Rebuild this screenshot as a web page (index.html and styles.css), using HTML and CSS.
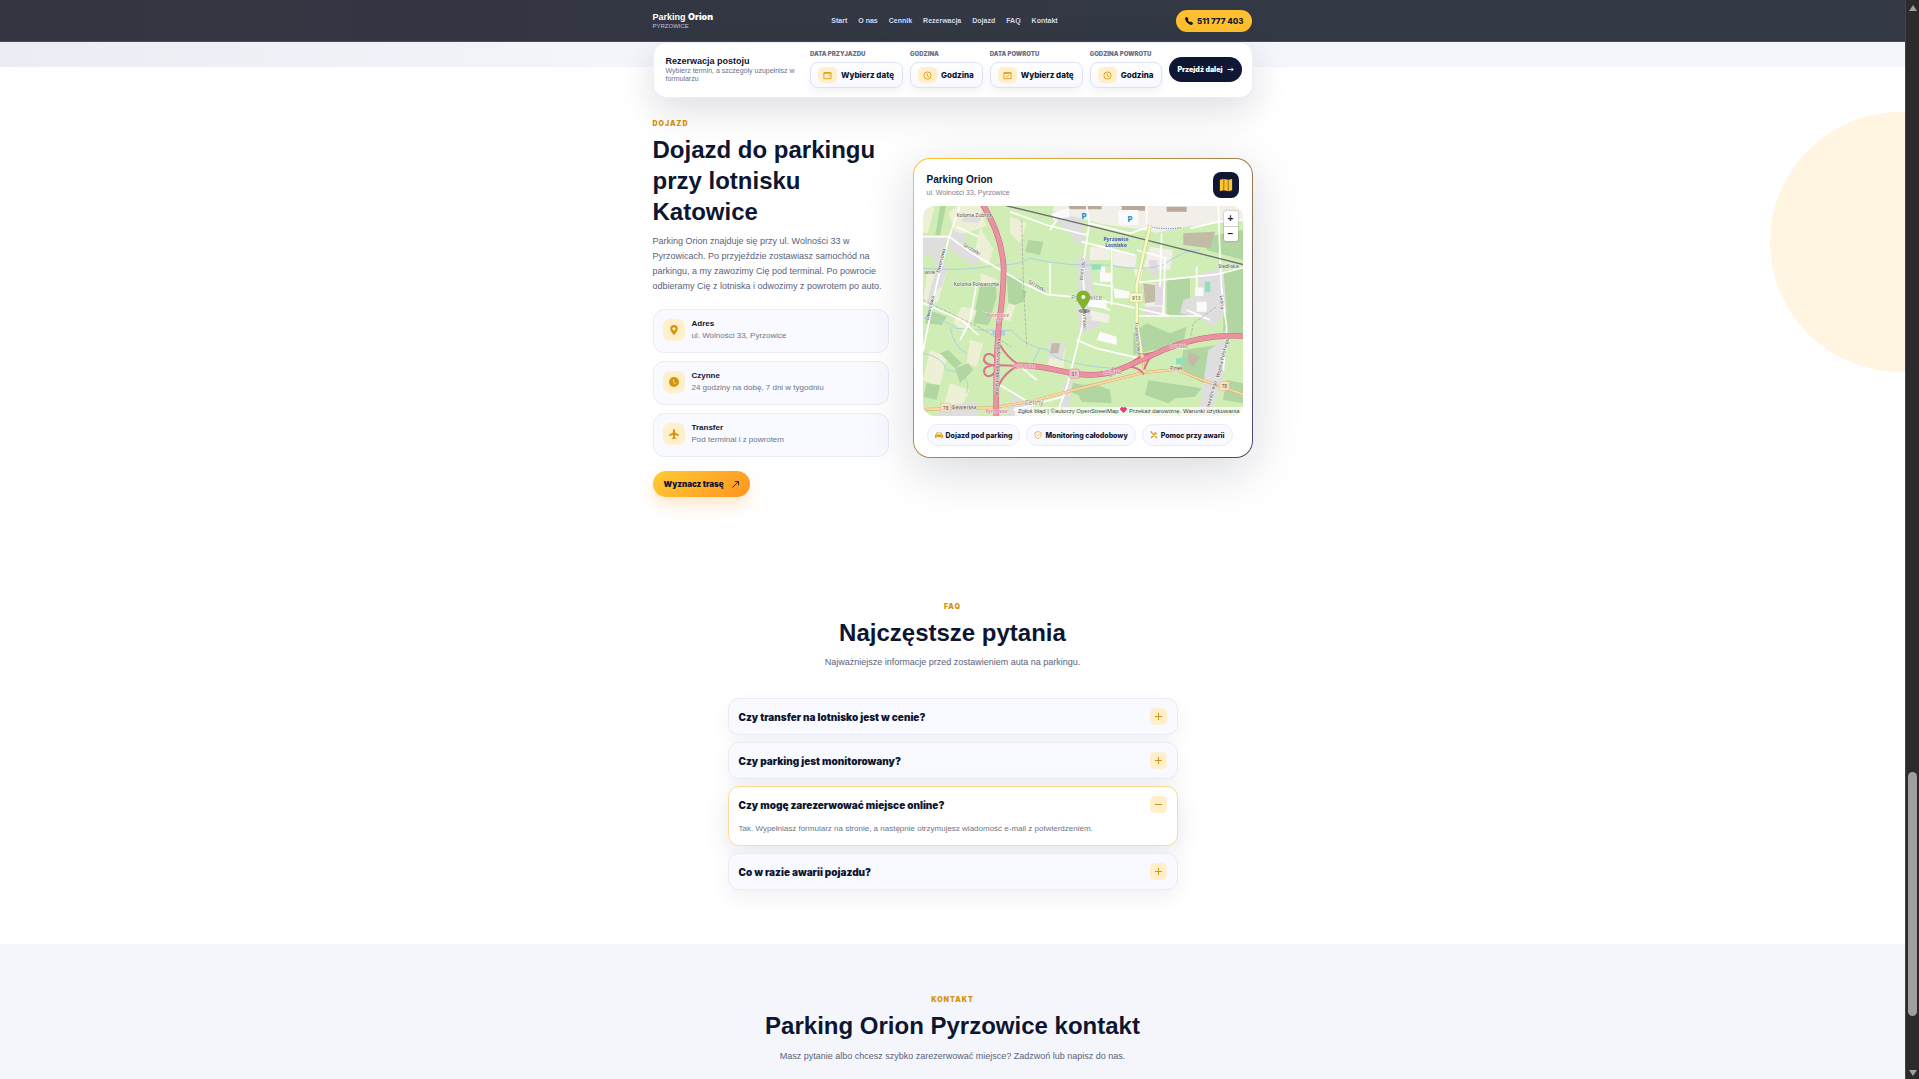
FILE: index.html
```html
<!DOCTYPE html>
<html lang="pl">
<head>
    <meta charset="UTF-8">
    <meta name="viewport" content="width=device-width, initial-scale=1.0">
    <title>Parking Orion Pyrzowice</title>
    <link rel="stylesheet" href="styles.css">
</head>
<body>

<div class="page">

    <!-- Header -->
    <header class="header">
        <div class="container header-inner">
            <a class="logo" href="#start">
                <span class="logo-name">Parking <b>Orion</b></span>
                <span class="logo-sub">PYRZOWICE</span>
            </a>
            <nav class="nav">
                <a href="#start">Start</a>
                <a href="#o-nas">O nas</a>
                <a href="#cennik">Cennik</a>
                <a href="#rezerwacja">Rezerwacja</a>
                <a href="#dojazd">Dojazd</a>
                <a href="#faq">FAQ</a>
                <a href="#kontakt">Kontakt</a>
            </nav>
            <a class="phone" href="tel:511777403">
                <svg width="8" height="8" viewBox="0 0 16 16"><path fill="currentColor" d="M1.9.5a1.7 1.7 0 0 1 2.6.2l1.8 2.3c.3.4.4 1 .3 1.500l-.5 2.200c0 .2 0 .4.2.5l2.500 2.500c.1.200.3.200.5.200l2.200-.5c.5-.2 1 0 1.500.300l2.300 1.800c.8.600.9 1.800.200 2.600l-1 1c-.8.800-1.900 1.100-2.900.700A18 18 0 0 1 .2 4.400C-.1 3.400.1 2.300.9 1.500z"/></svg>
                511 777 403
            </a>
        </div>
    </header>

    <!-- Booking bar -->
    <div class="booking-bar">
        <form class="container booking">
            <div class="booking-intro">
                <strong>Rezerwacja postoju</strong>
                <p>Wybierz termin, a szczegóły uzupełnisz w formularzu</p>
            </div>
            <div class="field">
                <label for="date-from">Data przyjazdu</label>
                <button type="button" id="date-from">
                    <span class="field-icon"><svg width="9" height="9" viewBox="0 0 20 20"><path d="M2 4h16v13H2z"/><path class="thick" d="M2 4.500h16"/><path d="M13 9h1v1h-1z"/></svg></span>
                    Wybierz datę
                </button>
            </div>
            <div class="field">
                <label for="time-from">Godzina</label>
                <button type="button" id="time-from">
                    <span class="field-icon"><svg width="9" height="9" viewBox="0 0 20 20"><circle cx="10" cy="10" r="8"/><path d="M9.500 5v6l4 2"/></svg></span>
                    Godzina
                </button>
            </div>
            <div class="field">
                <label for="date-to">Data powrotu</label>
                <button type="button" id="date-to">
                    <span class="field-icon"><svg width="9" height="9" viewBox="0 0 20 20"><path d="M2 4h16v13H2z"/><path class="thick" d="M2 4.500h16"/><path d="M7 11l2 2 4-4"/></svg></span>
                    Wybierz datę
                </button>
            </div>
            <div class="field">
                <label for="time-to">Godzina powrotu</label>
                <button type="button" id="time-to">
                    <span class="field-icon"><svg width="9" height="9" viewBox="0 0 20 20"><circle cx="10" cy="10" r="8"/><path d="M9.500 5v6l4 2"/></svg></span>
                    Godzina
                </button>
            </div>
            <button type="submit" class="booking-submit">Przejdź dalej
                <svg width="7" height="7" viewBox="0 0 16 16"><path d="M1 8h13M10 4l4 4-4 4"/></svg>
            </button>
        </form>
    </div>

    <!-- Directions -->
    <section class="directions" id="dojazd">
        <div class="container directions-grid">
            <div class="directions-text">
                <p class="eyebrow">Dojazd</p>
                <h2>Dojazd do parkingu przy lotnisku Katowice</h2>
                <p class="lead">Parking Orion znajduje się przy ul. Wolności 33 w Pyrzowicach. Po przyjeździe zostawiasz samochód na parkingu, a my zawozimy Cię pod terminal. Po powrocie odbieramy Cię z lotniska i odwozimy z powrotem po auto.</p>
                <ul class="info-list">
                    <li>
                        <span class="info-icon"><svg width="10" height="10" viewBox="0 0 16 16"><path fill="currentColor" fill-rule="evenodd" d="M8 16s6-5.700 6-10A6 6 0 0 0 2 6c0 4.300 6 10 6 10zM8 3.500a2.600 2.600 0 1 1 0 5.200 2.600 2.600 0 0 1 0-5.200z"/></svg></span>
                        <div><h3>Adres</h3><p>ul. Wolności 33, Pyrzowice</p></div>
                    </li>
                    <li>
                        <span class="info-icon"><svg width="10" height="10" viewBox="0 0 16 16"><circle cx="8" cy="8" r="8" fill="currentColor"/><path d="M7.500 3.500V9l3.500 2" fill="none" stroke="#fff0cb" stroke-width="1.200"/></svg></span>
                        <div><h3>Czynne</h3><p>24 godziny na dobę, 7 dni w tygodniu</p></div>
                    </li>
                    <li>
                        <span class="info-icon"><svg width="10" height="10" viewBox="0 0 16 16"><path fill="currentColor" d="M6.400 2.300C6.600 1 7.200 0 8 0s1.400 1 1.600 2.300L9.800 5.500 16 9v2l-6.300-1.300-.4 3.400 2.200 1.500V16L8 15.400 4.500 16v-1.400l2.200-1.500-.4-3.400L0 11V9l6.200-3.500z"/></svg></span>
                        <div><h3>Transfer</h3><p>Pod terminal i z powrotem</p></div>
                    </li>
                </ul>
                <a class="route-button" href="#trasa">Wyznacz trasę
                    <svg width="7" height="7" viewBox="0 0 16 16"><path d="M1 15L15 1M6 1h9v9"/></svg>
                </a>
            </div>

            <div class="map-card">
                <div class="map-head">
                    <div>
                        <h3>Parking Orion</h3>
                        <p>ul. Wolności 33, Pyrzowice</p>
                    </div>
                    <span class="map-badge"><svg width="14" height="14" viewBox="0 0 16 16"><path fill="#ffc42e" d="M1 2l4-1 6 1 4-1v13l-4 1-6-1-4 1z"/><path d="M5.500 1v13M10.500 2v13" stroke="#7b6426" stroke-width="1"/></svg></span>
                </div>

                <div class="map">
                    <svg class="map-canvas" viewBox="69 168 960 630" preserveAspectRatio="xMidYMid slice">
                        <rect x="69" y="168" width="960" height="630" fill="#d0edb5"/>

                        <!-- farmland -->
                        <g fill="#eef0d5">
                            <path d="M69 168h35l-20 80H69zM145 190l25-22h70l20 60-90 30zM80 375l60-10-25 90-46 10zM185 470l50 10-45 65-30-30zM240 235l40 60-15 50-45-20zM90 600l50 20-20 90-51-20zM150 700l60 20-30 60-50-10zM210 570l40 10-20 70-30-10zM240 370l55 20-5 50-40-10zM330 450l20 5-20 60-20-10zM460 590l35 8-5 60-50-10zM330 200l50 20-20 60-30-30zM860 600l50 20-30 60-30-20z"/>
                        </g>
                        <!-- forest -->
                        <g fill="#b2d6a2">
                            <path d="M120 168h18l-18 88h-14zM320 375l50 15-5 25 15 10-10 30-25 10-20-5zM240 410l50-15v45l-15 50-50-10zM85 480l55 20-15 25-50-5zM230 480l50 15-15 30-45-5zM120 610l25-10 40 40-20 15zM165 655l40-15 15 20-40 40zM80 700l40 5-10 45-40-10zM500 695l50 10 30-5 50 20 5 40-90-5-10-20-40-15zM745 690l60 10 100 15-20 25-60 5-20 15-70-25zM700 550l40-30 70 30 50-20-10 50-90 20-60 15zM920 260l109-20v90l-109-30zM800 390l70-5v60l30 35-40 20-60 0zM970 370l59-15v195l-59-5zM385 270l45 5-10 40-45-10zM850 600l100-15-40 115-70-40zM980 690l49 10v60l-60-10z"/>
                        </g>
                        <!-- built-up areas -->
                        <g fill="#dedede">
                            <path d="M69 265l70-10v25l-10 50-25 10-10-30-25 10zM150 240l50 15-10 30 50 35-10 30-80-50zM190 190l55 10-10 20-50-5zM115 330l28 20-18 60-15 10-10 50-20-10zM460 168h60l30 50v60l-25 5-10-30-50-40zM530 320h36l10 60 5 100-5 60-35 10-10-60 5-60zM900 370l70-15 10 130-40 45-50-30-50-10 10-40 50-15zM925 600l55-35-10 120-40 113h-35zM450 570l45 12-8 50-45-12zM130 765l100-10 5 43H110zM340 735l60 35-10 28h-70zM490 700l30-10-15 90-25 10z"/>
                        </g>
                        <!-- plots near the airport -->
                        <g fill="#f2efe9">
                            <path d="M460 168h569v45l-160 15-100 20-50-10-110-15-150-40zM570 290h60v40h-60zM640 300l70 15-5 40-65-10zM750 290l70 10-10 60-80-5zM735 400h60v90l-60 10zM570 480l60 15-5 25-50-10zM700 350l30 5-15 60z"/>
                        </g>
                        <g fill="#e3d9e2">
                            <path d="M765 400h32v65h-32zM745 330h28v45h-20zM735 470h50v25h-50zM565 515h35l-5 20h-30z"/>
                        </g>
                        <g fill="#c2bba6">
                            <path d="M850 250l95-5-15 50-80-10zM730 400l35 5v50l-30 5zM865 605l35 15-20 30-15-10zM455 580h25l-5 30h-25z"/>
                        </g>
                        <g fill="#b9a99c"><path d="M505 168h100v10h-95zM665 168h70v14h-70zM800 170h60v15h-60z"/></g>
                        <g fill="#fafafa">
                            <path d="M455 190l50-15 5 25-50 10zM655 180h60v45h-60zM600 365l35 5v25h-35zM560 440l60 10v25l-55-5zM580 350h35v20zM640 415l50 10v20h-45zM600 545l50 15v25l-60-15zM890 455h30v30h-30zM885 410l25 3v25h-25z"/>
                        </g>
                        <g fill="#8fe0be"><path d="M575 343h28v16h-28zM915 395h16v32h-16zM828 625h30v18h-30z"/></g>
                        <g fill="#aad3df"><path d="M277 540h15v15h-15zM300 540h15v17h-15zM722 570h9v9h-9z"/></g>

                        <!-- streams -->
                        <g class="stream">
                            <path d="M69 355q120 10 230-10 60 0 90-20 110 25 230 20 110 20 170 0 70-50 110-45"/>
                            <path d="M69 505q60 0 100 30 140 10 165 5 40 50 110 60 20 40 190 55 60-5 110-40"/>
                            <path d="M69 610q60 10 70 50 80 10 60 70M150 530q10 60 50 80M420 595l-20 40"/>
                        </g>

                        <!-- local roads -->
                        <g class="road">
                            <path d="M180 168l-33 95-35 130-43 210M69 260h78l70 50 85 50 65 38 75 36 100 8 110 20 155 35"/>
                            <path d="M330 185l110 40 120 30 10-35 120 30 45-15h30M560 168l8 55-20 130 5 90-5 80-28 110-20 80-35 93"/>
                            <path d="M710 398l240-25 80-20M870 235l85-20 74-5M955 168l5 150 5 100 15 115-10 130"/>
                            <path d="M710 498h190M795 320l-5 180M785 250l-5 160M530 570l60 25 130 30M230 400l-20 115-30 55"/>
                            <path d="M635 265v200M450 340v95M545 275l160 40M710 300l90 25M170 230l65 30M70 460l115 50 50 45M300 705l100 60M350 640l60 50M740 160v60"/>
                            <path d="M580 400l60 10M570 460l60 20M860 480l70 30M890 350v60M470 210l-20 30M490 740l-150 40"/>
                        </g>
                        <g class="path">
                            <path d="M365 210l5 180 10 200M69 450l165 80 100 60M640 650l-10 30 240-110 10-50 70-50"/>
                        </g>

                        <!-- railway -->
                        <path class="rail" d="M310 165L600 235 1035 345"/>
                        <path d="M755 232q60 8 90 0" fill="none" stroke="#5b5bd0" stroke-width="3" stroke-dasharray="3 4"/>

                        <!-- main roads -->
                        <g class="yellow-edge"><path d="M750 228l-20 85-20 90v110l16 110"/></g>
                        <g class="yellow"><path d="M750 228l-20 85-20 90v110l16 110"/></g>
                        <g class="orange-edge"><path d="M69 778l210-5 120-20 110-30 220-55 100-10 60 25 140 50"/><path d="M726 610l8 60"/></g>
                        <g class="orange"><path d="M69 778l210-5 120-20 110-30 220-55 100-10 60 25 140 50"/><path d="M726 610l8 60"/></g>
                        <g class="ramp">
                            <path d="M300 585q20 35 53 58M353 648q-40 20-58 60M353 648q-30-2-60-2M290 640c-5-35-38-35-38-12 0 14 14 18 38 18-24 0-38 4-38 18 0 22 33 20 38-14M640 665q60-25 85-50 20-5 50-8M690 650q20 0 40 20 10-45 35-60"/>
                        </g>
                        <g class="motorway-edge"><path d="M246 160q58 90 65 190 0 80-14 170-10 110-8 280"/><path d="M350 646q60 0 130 16 100 25 170 0 60-25 140-62 120-50 240-42"/></g>
                        <g class="motorway"><path d="M246 160q58 90 65 190 0 80-14 170-10 110-8 280"/><path d="M350 646q60 0 130 16 100 25 170 0 60-25 140-62 120-50 240-42"/></g>
                        <circle cx="726" cy="618" r="6" fill="#fcd6a4" stroke="#d89a4f"/>
                        <circle cx="734" cy="664" r="6" fill="#fcd6a4" stroke="#d89a4f"/>
                        <circle cx="750" cy="231" r="6" fill="#f7fabf" stroke="#b8bb6e"/>

                        <!-- place names -->
                        <g class="place">
                            <text x="222" y="201">Kolonia Zubrza</text>
                            <text x="229" y="408">Kolonia Folwarczna</text>
                            <text x="985" y="354">Siedliska</text>
                            <text x="829" y="659">Pinek</text>
                            <text x="192" y="778">Siewierska</text>
                            <text x="89" y="372">wice</text>
                            <text class="muted" x="402" y="766">Celiny</text>
                            <text class="muted" x="560" y="451">Pyrzowice</text>
                            <text transform="translate(213 302) rotate(31)">Szczotki</text>
                            <text transform="translate(408 412) rotate(31)">Szczotki</text>
                            <text transform="translate(128 333) rotate(-76)">Dworcowa</text>
                            <text transform="translate(95 475) rotate(-76)">Dworcowa</text>
                            <text transform="translate(552 360) rotate(-84)">Wolności</text>
                            <text transform="translate(549 508) rotate(88)">Wolności</text>
                            <text transform="translate(708 566) rotate(84)">Transportowa</text>
                            <text transform="translate(961 457) rotate(86)">Leśna</text>
                            <text transform="translate(972 625) rotate(-76)">Wojska Polskiego</text>
                            <text transform="translate(938 738) rotate(-74)">Zawadzkiego</text>
                            <text transform="translate(297 652) rotate(-88)">Autostrada Bursztynowa</text>
                        </g>

                        <!-- road shields -->
                        <g class="shield">
                            <rect x="689" y="429" width="40" height="28" rx="4" fill="#f7fabf" stroke="#b0b070"/><text x="709" y="450">913</text>
                            <rect x="508" y="657" width="30" height="28" rx="4" fill="#f2c4cd" stroke="#c56b7e"/><text x="523" y="678">S1</text>
                            <rect x="958" y="695" width="30" height="26" rx="4" fill="#fce2c0" stroke="#cfa46c"/><text x="973" y="715">78</text>
                            <rect x="122" y="760" width="30" height="26" rx="4" fill="#fce2c0" stroke="#cfa46c"/><text x="137" y="780">78</text>
                        </g>
                        <g class="exit">
                            <text x="294" y="500">Pyrzowice</text>
                            <text x="294" y="517">36</text>
                            <text x="372" y="655">Pyrzowice</text>
                            <text x="638" y="672">Lotnisko</text>
                            <text x="836" y="594">Lotnisko</text>
                            <text x="290" y="790">Pyrzowice</text>
                        </g>
                        <g class="station">
                            <text x="648" y="274">Pyrzowice</text>
                            <text x="648" y="291">Lotnisko</text>
                        </g>
                        <g class="parking"><text x="552" y="207">P</text><text x="690" y="217">P</text></g>

                        <!-- pin -->
                        <ellipse cx="553" cy="483" rx="18" ry="6" fill="#000" opacity=".3"/>
                        <path d="M550 483c-4-16-20-26-20-41a20 20 0 0 1 40 0c0 15-16 25-20 41z" fill="#7fb526" stroke="#699b1c" stroke-width="1"/>
                        <circle cx="550" cy="441" r="6" fill="#fff"/>
                    </svg>
                    <div class="map-zoom">
                        <button type="button" aria-label="Przybliż">+</button>
                        <button type="button" aria-label="Oddal">−</button>
                    </div>
                    <div class="map-credit">
                        <a href="#blad">Zgłoś błąd</a> | <a href="#osm">©autorzy OpenStreetMap</a>
                        <svg width="7" height="6" viewBox="0 0 14 12"><path fill="#f0357c" d="M7 12L1.200 6.400A3.700 3.700 0 0 1 7 1.600a3.700 3.700 0 0 1 5.800 4.800z"/></svg>
                        <a href="#darowizna">Przekaż darowiznę.</a> <a href="#warunki">Warunki użytkowania</a>
                    </div>
                </div>

                <div class="pills">
                    <span class="pill"><svg width="8" height="8" viewBox="0 0 16 16"><path fill="currentColor" fill-rule="evenodd" d="M3.500 3h9L14.500 7 16 8.500V14h-3v-2H3v2H0V8.500L1.500 7zM4.500 4.500L3.300 7h9.400l-1.200-2.500zM2 9v1.500h2.500V9zM11.500 9v1.500H14V9z"/></svg>Dojazd pod parking</span>
                    <span class="pill"><svg width="8" height="8" viewBox="0 0 16 16"><path fill="none" stroke="currentColor" stroke-width="1.300" d="M8 1l6 2v4c0 4-2.500 7-6 8.500C4.500 14 2 11 2 7V3zM5.500 7.500l2 2 3.500-3.500"/></svg>Monitoring całodobowy</span>
                    <span class="pill"><svg width="8" height="8" viewBox="0 0 16 16"><path fill="none" stroke="currentColor" stroke-width="2.400" d="M2 2l12 12M2 14L11.500 4.500M10 1.500a4 4 0 0 0 4.500 4.500M1 1l3 1"/></svg>Pomoc przy awarii</span>
                </div>
            </div>
        </div>
    </section>

    <!-- FAQ -->
    <section class="faq" id="faq">
        <p class="eyebrow">FAQ</p>
        <h2>Najczęstsze pytania</h2>
        <p class="lead">Najważniejsze informacje przed zostawieniem auta na parkingu.</p>
        <div class="faq-list">
            <details class="faq-item">
                <summary>Czy transfer na lotnisko jest w cenie?<span class="toggle"></span></summary>
                <p>Tak, transfer jest w cenie.</p>
            </details>
            <details class="faq-item">
                <summary>Czy parking jest monitorowany?<span class="toggle"></span></summary>
                <p>Tak, przez całą dobę.</p>
            </details>
            <details class="faq-item" open>
                <summary>Czy mogę zarezerwować miejsce online?<span class="toggle"></span></summary>
                <p>Tak. Wypełniasz formularz na stronie, a następnie otrzymujesz wiadomość e-mail z potwierdzeniem.</p>
            </details>
            <details class="faq-item">
                <summary>Co w razie awarii pojazdu?<span class="toggle"></span></summary>
                <p>Pomagamy przy awarii.</p>
            </details>
        </div>
    </section>

    <!-- Contact -->
    <section class="contact" id="kontakt">
        <p class="eyebrow">Kontakt</p>
        <h2>Parking Orion Pyrzowice kontakt</h2>
        <p class="lead">Masz pytanie albo chcesz szybko zarezerwować miejsce? Zadzwoń lub napisz do nas.</p>
    </section>
</div>

<!-- Scrollbar -->
<div class="scrollbar" aria-hidden="true">
    <svg width="10" height="8" viewBox="0 0 10 8"><path d="M5 1l4 6H1z"/></svg>
    <div class="track">
        <div class="track-before"></div>
        <div class="thumb"></div>
        <div class="track-after"></div>
    </div>
    <svg width="10" height="8" viewBox="0 0 10 8"><path d="M5 7l4-6H1z"/></svg>
</div>

</body>
</html>
```
FILE: styles.css
```css
* {
    box-sizing: border-box;
    margin: 0;
    padding: 0;
}

body {
    display: flex;
    height: 100vh;
    overflow: hidden;
    font-family: "Liberation Sans", Arial, sans-serif;
    font-size: 8px;
    color: #0e1530;
    background: #fff;
}

a {
    color: inherit;
    text-decoration: none;
}

button {
    font: inherit;
    color: inherit;
    cursor: pointer;
}

.page {
    flex: 1;
    height: 100vh;
    overflow: hidden;
}

.container {
    width: 100%;
    max-width: 600px;
    margin: 0 auto;
}

/* Header */
.header {
    background: linear-gradient(90deg, #343541, #323844 60%);
    border-bottom: 1px solid #474b58;
}

.header-inner {
    display: flex;
    justify-content: space-between;
    align-items: center;
    height: 41px;
}

.logo {
    display: flex;
    flex-direction: column;
    color: #fff;
}

.logo-name {
    font-size: 9px;
    font-weight: bold;
    line-height: 10px;
}

.logo-name b {
    font-family: Inter, sans-serif;
    font-weight: 900;
}

.logo-sub {
    font-size: 6px;
    line-height: 8px;
    color: #bcc3e6;
}

.nav {
    display: flex;
    gap: 11px;
    font-size: 7px;
    font-weight: bold;
    color: #d3d8ee;
}

.phone {
    display: flex;
    align-items: center;
    gap: 4px;
    height: 22px;
    padding: 0 9px;
    border-radius: 11px;
    background: #ffbf2e;
    color: #10162c;
    font-family: Inter, sans-serif;
    font-size: 8px;
    font-weight: 800;
}

/* Booking bar */
.booking-bar {
    position: relative;
    z-index: 2;
    background: linear-gradient(90deg, #ececf4, #f4f6fb 35%) no-repeat;
    background-size: 100% 25px;
}

.booking {
    display: flex;
    align-items: center;
    gap: 7px;
    height: 56px;
    padding: 0 10px 2px 12px;
    border: 1px solid #eceef6;
    border-radius: 13px;
    background: #fff;
    box-shadow: 0 12px 36px rgba(14, 21, 48, 0.14);
}

.booking-intro {
    flex: 1;
}

.booking-intro strong {
    font-size: 9px;
    line-height: 11px;
}

.booking-intro p {
    max-width: 132px;
    font-size: 7px;
    line-height: 8px;
    color: #69718a;
}

.field {
    display: flex;
    flex-direction: column;
    gap: 4px;
}

.field label {
    font-family: Inter, sans-serif;
    font-size: 6px;
    font-weight: 900;
    line-height: 8px;
    text-transform: uppercase;
    color: #69718a;
}

.field button {
    display: flex;
    align-items: center;
    gap: 4px;
    height: 26px;
    padding: 0 8px 0 7px;
    border: 1px solid #dde1f3;
    border-radius: 8px;
    background: linear-gradient(#fff, #f8f9ff);
    box-shadow: 0 4px 8px rgba(14, 21, 48, 0.05);
    font-family: Inter, sans-serif;
    font-size: 8px;
    font-weight: 800;
}

.field-icon {
    display: flex;
    align-items: center;
    justify-content: center;
    width: 19px;
    height: 16px;
    border-radius: 5px;
    background: #fff0cb;
}

.field-icon svg {
    fill: none;
    stroke: #dc9a14;
    stroke-width: 2;
}

.field-icon .thick {
    stroke-width: 3;
}

.booking-submit {
    display: flex;
    align-items: center;
    gap: 4px;
    height: 25px;
    padding: 0 8px;
    border: 0;
    border-radius: 13px;
    background: #0f1735;
    color: #fff;
    font-family: Inter, sans-serif;
    font-size: 7px;
    font-weight: 900;
}

.booking-submit svg,
.route-button svg {
    fill: none;
    stroke: currentColor;
    stroke-width: 2;
}

/* Shared headings */
.eyebrow {
    font-family: Inter, sans-serif;
    font-size: 7px;
    font-weight: 900;
    line-height: 10px;
    letter-spacing: 1px;
    text-transform: uppercase;
    color: #d6930d;
}

h2 {
    font-size: 24px;
    line-height: 31px;
    color: #0e1530;
}

.lead {
    font-size: 9px;
    line-height: 15px;
    color: #59627a;
}

/* Directions */
.directions {
    position: relative;
    overflow: hidden;
    margin-top: -40px;
    padding: 61px 0 44px;
}

.directions::after {
    content: "";
    position: absolute;
    top: 54px;
    right: -125px;
    width: 260px;
    height: 260px;
    border-radius: 50%;
    background: #fff5e1;
}

.directions-grid {
    display: grid;
    grid-template-columns: 236px 1fr;
    gap: 24px;
    align-items: center;
}

.directions h2 {
    margin: 5px 0 7px;
}

.info-list {
    display: grid;
    gap: 8px;
    margin: 15px 0 14px;
    list-style: none;
}

.info-list li {
    display: flex;
    gap: 7px;
    height: 44px;
    padding: 9px;
    border: 1px solid #e9ecf7;
    border-radius: 11px;
    background: #f9faff;
}

.info-icon {
    display: flex;
    align-items: center;
    justify-content: center;
    width: 22px;
    height: 22px;
    border-radius: 7px;
    background: #fff0cb;
    color: #d6930d;
}

.info-list h3 {
    font-size: 8px;
    line-height: 10px;
}

.info-list p {
    line-height: 14px;
    color: #6d7588;
}

.route-button {
    display: inline-flex;
    align-items: center;
    gap: 8px;
    height: 26px;
    padding: 0 11px;
    border-radius: 13px;
    background: linear-gradient(135deg, #ffcb33, #ff9421);
    box-shadow: 0 8px 16px rgba(255, 160, 50, 0.25);
    font-family: Inter, sans-serif;
    font-size: 8px;
    font-weight: 900;
}

/* Map card */
.map-card {
    padding: 13px 9px 11px;
    border: 1px solid transparent;
    border-radius: 17px;
    background:
        linear-gradient(#fff, #fff) padding-box,
        linear-gradient(135deg, #ffc42e, #4a4270) border-box;
    box-shadow: 0 12px 50px rgba(14, 21, 48, 0.16);
}

.map-head {
    display: flex;
    justify-content: space-between;
    padding: 0 4px;
}

.map-head h3 {
    margin-top: 2px;
    font-size: 10px;
    line-height: 12px;
}

.map-head p {
    font-size: 7px;
    line-height: 13px;
    color: #7a8194;
}

.map-badge {
    display: flex;
    align-items: center;
    justify-content: center;
    width: 26px;
    height: 26px;
    border-radius: 8px;
    background: #0f1735;
}

.map {
    position: relative;
    overflow: hidden;
    height: 210px;
    margin: 7px 0 8px;
    border-radius: 12px;
}

.map-canvas {
    display: block;
    width: 100%;
    height: 100%;
}

.map-canvas text {
    text-anchor: middle;
    font-family: "Noto Sans", sans-serif;
}

.stream, .road, .path, .yellow, .yellow-edge, .orange, .orange-edge,
.motorway, .motorway-edge, .ramp, .rail {
    fill: none;
}

.stream { stroke: #aad3df; stroke-width: 3; }
.road { stroke: #fff; stroke-width: 5; }
.path { stroke: #a79fb0; stroke-width: 2; stroke-dasharray: 10 4; }
.rail { stroke: #707070; stroke-width: 4; }
.yellow-edge { stroke: #c6c98a; stroke-width: 11; }
.yellow { stroke: #f7fabf; stroke-width: 8; }
.orange-edge { stroke: #d6a05c; stroke-width: 8; }
.orange { stroke: #fcd6a4; stroke-width: 6; }
.ramp { stroke: #dc7389; stroke-width: 6; }
.motorway-edge { stroke: #d0647c; stroke-width: 17; }
.motorway { stroke: #e892a2; stroke-width: 14; }

.place text {
    font-size: 15px;
    fill: #444;
    stroke: #fff;
    stroke-width: 2;
    paint-order: stroke;
}

.place .muted {
    font-size: 20px;
    fill: #858585;
}

.shield text {
    font-size: 15px;
    fill: #555;
}

.exit text {
    font-size: 15px;
    font-style: italic;
    fill: #c9405e;
    stroke: #fff;
    stroke-width: 2;
    paint-order: stroke;
}

.station text {
    font-size: 15px;
    font-weight: bold;
    fill: #4d56bd;
}

.parking text {
    font-size: 26px;
    font-weight: bold;
    fill: #1593d4;
}

.map-zoom {
    position: absolute;
    top: 5px;
    right: 5px;
    display: grid;
    width: 14px;
    border-radius: 2px;
    background: #fff;
    box-shadow: 0 0 2px rgba(0, 0, 0, 0.4);
}

.map-zoom button {
    height: 15px;
    border: 0;
    background: none;
    font-size: 10px;
    font-weight: bold;
    line-height: 14px;
    color: #222;
}

.map-zoom button + button {
    border-top: 1px solid #ccc;
}

.map-credit {
    position: absolute;
    right: 0;
    bottom: 0;
    padding: 0 3px;
    background: rgba(255, 255, 255, 0.7);
    font-size: 6px;
    line-height: 9px;
    white-space: nowrap;
    color: #444;
}

.pills {
    display: flex;
    gap: 6px;
    padding: 0 4px;
}

.pill {
    display: flex;
    align-items: center;
    gap: 3px;
    height: 22px;
    padding: 0 7px;
    border: 1px solid #e9ecf7;
    border-radius: 11px;
    background: #f9faff;
    font-family: Inter, sans-serif;
    font-size: 7px;
    font-weight: 800;
    white-space: nowrap;
}

.pill svg {
    color: #dc9a14;
}

/* FAQ */
.faq {
    padding: 61px 0 54px;
    text-align: center;
}

.faq h2 {
    margin: 5px 0 7px;
}

.contact h2 {
    margin: 5px 0 8px;
}

.faq-list {
    display: grid;
    gap: 7px;
    max-width: 450px;
    margin: 28px auto 0;
    text-align: left;
}

.faq-item {
    padding: 0 10px;
    border: 1px solid #e9ecf7;
    border-radius: 11px;
    background: #f9faff;
    box-shadow: 0 8px 20px rgba(14, 21, 48, 0.06);
}

.faq-item summary {
    display: flex;
    justify-content: space-between;
    align-items: center;
    height: 35px;
    font-family: Inter, sans-serif;
    font-size: 10px;
    font-weight: 900;
    list-style: none;
    cursor: pointer;
}

.faq-item p {
    padding-bottom: 9px;
    line-height: 14px;
    color: #6d7588;
}

.faq-item[open] {
    border-color: #ffdc94;
    background: #fff;
    box-shadow: 0 8px 26px rgba(14, 21, 48, 0.1);
}

.toggle {
    width: 17px;
    height: 17px;
    border-radius: 5px;
    background:
        linear-gradient(#d6930d, #d6930d) center / 7px 1px no-repeat,
        linear-gradient(#d6930d, #d6930d) center / 1px 7px no-repeat,
        #fff0cb;
}

.faq-item[open] .toggle {
    background:
        linear-gradient(#d6930d, #d6930d) center / 7px 1px no-repeat,
        #fff0cb;
}

/* Contact */
.contact {
    padding: 51px 0 60px;
    background: #f4f6fb;
    text-align: center;
}

/* Scrollbar */
.scrollbar {
    display: flex;
    flex-direction: column;
    align-items: center;
    width: 14px;
    height: 100vh;
    padding: 4px 0 2px;
    border-left: 1px solid #444;
    background: #2b2b2b;
}

.scrollbar svg {
    fill: #a0a0a0;
}

.track {
    flex: 1;
    display: flex;
    flex-direction: column;
    width: 9px;
}

.track-before { flex: 760; }
.thumb { flex: 244; border-radius: 5px; background: #9f9f9f; }
.track-after { flex: 53; }
```
